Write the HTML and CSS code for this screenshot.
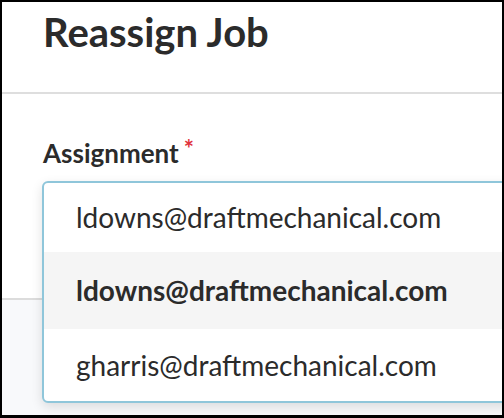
FILE: index.html
```html
<!DOCTYPE html>
<html lang="en">
<head>
    <meta charset="UTF-8">
    <meta name="viewport" content="width=device-width, initial-scale=1.0">
    <title>Reassign Job</title>
    <link rel="stylesheet" href="styles.css">
</head>
<body>
    <div class="modal">
        <div class="modal-header">
            <h1>Reassign Job</h1>
        </div>

        <div class="modal-body">
            <label class="field-label">Assignment<span class="required">*</span></label>
        </div>

        <div class="modal-footer"></div>

        <!-- Open select menu, drawn over body and footer -->
        <div class="select-menu">
            <div class="select-value">ldowns@draftmechanical.com</div>
            <div class="select-option active">ldowns@draftmechanical.com</div>
            <div class="select-option">gharris@draftmechanical.com</div>
        </div>
    </div>
</body>
</html>
```

FILE: styles.css
```css
body {
    margin: 0;
    font-family: Lato, 'Open Sans', sans-serif;
    color: #2b2b2b;
    background: #fff;
}

.modal {
    position: relative;
    width: 504px;
    height: 418px;
    box-sizing: border-box;
    border: 2px solid #000;
    border-bottom-width: 3px;
    overflow: hidden;
    display: flex;
    flex-direction: column;
}

.modal-header {
    height: 90px;
    padding: 0 41px;
    border-bottom: 2px solid #dedede;
}

h1 {
    margin: 0;
    padding-top: 6px;
    font-size: 40px;
    font-weight: 700;
    line-height: 48px;
}

.modal-body {
    height: 204px;
    padding: 0 41px;
}

.field-label {
    display: block;
    margin-top: 43px;
    font-size: 26px;
    font-weight: 700;
    line-height: 32px;
}

.required {
    color: #e0323c;
    font-size: 24px;
    vertical-align: top;
    margin-left: 5px;
    position: relative;
    top: -4px;
}

.modal-footer {
    flex: 1;
    background: #f8f9fb;
    border-top: 2px solid #dcdcdc;
}

.select-menu {
    position: absolute;
    left: 40px;
    top: 179px;
    width: 520px;
    background: #fff;
    border: 2px solid #8fc6da;
    border-radius: 6px;
    box-shadow: 0 4px 12px rgba(0, 0, 0, 0.12);
    overflow: hidden;
}

.select-value,
.select-option {
    padding: 0 32px;
    font-size: 28px;
}

.select-value {
    height: 69px;
    line-height: 69px;
}

.select-option {
    height: 72px;
    line-height: 72px;
}

.select-option.active {
    height: 77px;
    line-height: 77px;
    background: #f5f5f5;
    font-weight: 700;
}
```
